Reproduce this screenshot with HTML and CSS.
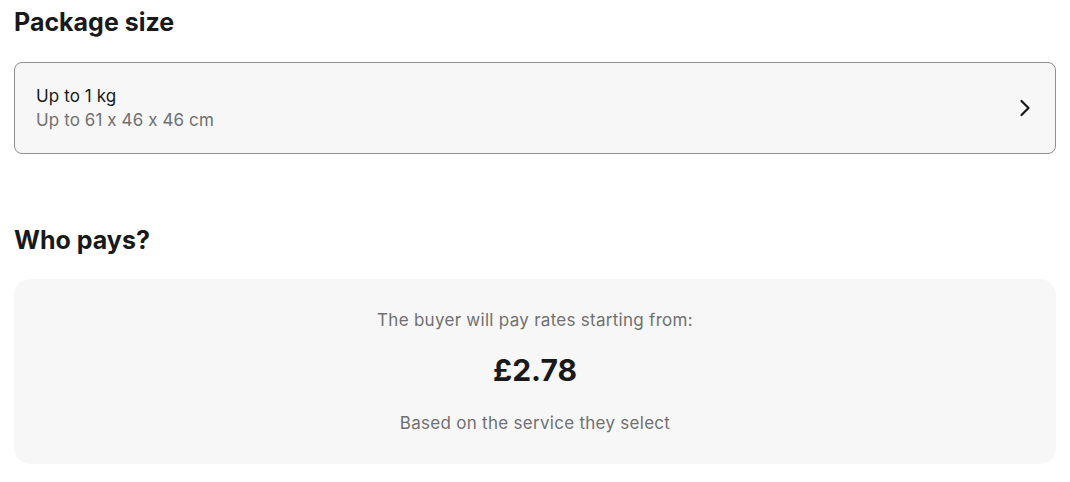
FILE: index.html
```html
<!DOCTYPE html>
<html>
<head>
<meta charset="utf-8">
<link rel="stylesheet" href="styles.css">
</head>
<body>
<main class="page">
  <section class="section">
    <h2 class="title">Package size</h2>
    <button class="size-card" type="button">
      <span class="size-text">
        <span class="size-main">Up to 1 kg</span>
        <span class="size-sub">Up to 61 x 46 x 46 cm</span>
      </span>
      <svg class="chev" width="12" height="18" viewBox="0 0 12 18" aria-hidden="true">
        <path d="M2.5 2 L9.5 9 L2.5 16" fill="none" stroke="#191919" stroke-width="2.2" stroke-linecap="round" stroke-linejoin="round"/>
      </svg>
    </button>
  </section>
  <section class="section pays">
    <h2 class="title">Who pays?</h2>
    <div class="pay-box">
      <p class="pay-line">The buyer will pay rates starting from:</p>
      <p class="pay-price">£2.78</p>
      <p class="pay-line">Based on the service they select</p>
    </div>
  </section>
</main>
</body>
</html>
```
FILE: styles.css
```css
* { box-sizing: border-box; }
html, body { margin: 0; background: #fff; }
body {
  font-family: Inter, "Open Sans", Arial, sans-serif;
  font-feature-settings: "calt" 0;
  color: #191919;
}
.page {
  padding: 0 14px;
}
.title {
  margin: 0;
  font-size: 25px;
  font-weight: 700;
  line-height: 32px;
  padding-top: 6px;
}
.size-card {
  margin-top: 24px;
  width: 100%;
  height: 92px;
  display: flex;
  align-items: center;
  justify-content: space-between;
  padding: 0 24px 0 21px;
  background: #f7f7f7;
  border: 1px solid #8f8f8f;
  border-radius: 8px;
  font: inherit;
  color: inherit;
  text-align: left;
}
.size-text {
  display: flex;
  flex-direction: column;
}
.size-main,
.size-sub {
  font-size: 17px;
  line-height: 24px;
  letter-spacing: 0.1px;
}
.size-main { color: #191919; }
.size-sub { color: #707070; }
.chev { display: block; }
.pays { margin-top: 68px; }
.pays .title { padding-top: 2px; }
.pay-box {
  margin-top: 23px;
  background: #f7f7f7;
  border-radius: 16px;
  height: 185px;
  display: flex;
  flex-direction: column;
  align-items: center;
  padding-top: 29px;
}
.pay-line {
  margin: 0;
  font-size: 17px;
  line-height: 24px;
  letter-spacing: 0.28px;
  color: #707070;
}
.pay-price {
  margin: 19px 0 22px;
  font-size: 30px;
  line-height: 38px;
  font-weight: 700;
  color: #191919;
}
```
